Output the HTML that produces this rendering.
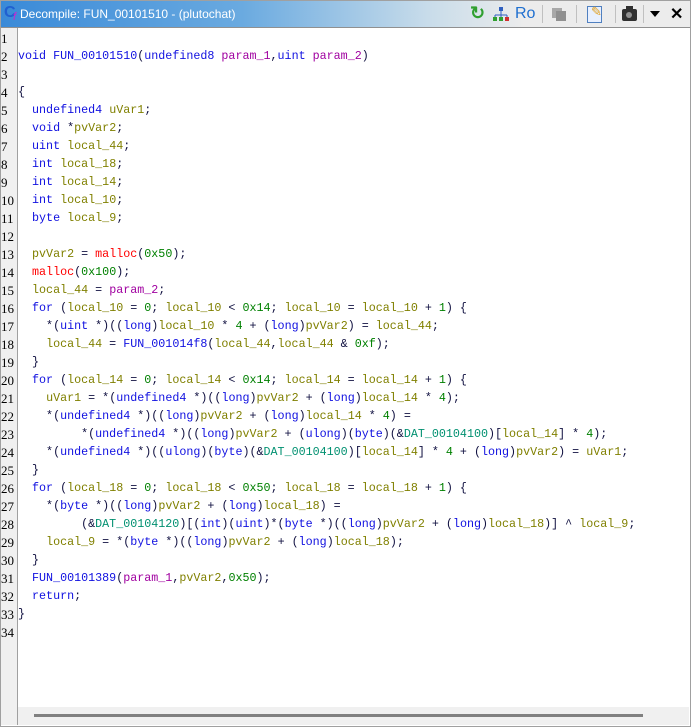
<!DOCTYPE html>
<html><head><style>
body{margin:0;width:691px;height:727px;background:#fff;overflow:hidden;position:relative;font-family:"Liberation Sans",sans-serif}
.frame{position:absolute;left:0;top:0;width:689px;height:725px;border:1px solid #a0a0a0}
.title{position:absolute;left:1px;top:1px;width:689px;height:26px;background:linear-gradient(90deg,#3a8ad8 0%,#6aaae0 35%,#c8dcea 62%,#ececec 76%,#ececec 100%);border-bottom:1px solid #909090}
.title .t{position:absolute;left:19px;top:6px;font-size:12px;color:#fff}
.gut{position:absolute;left:1px;top:28px;width:16px;height:697px;background:#f0f0f0;border-right:1px solid #a0a0a0}
.ln{position:absolute;left:1px;font-family:"Liberation Serif",serif;font-size:13px;color:#000;width:14px;text-align:left}
pre{position:absolute;left:18px;top:29px;margin:0;font-family:"Liberation Mono",monospace;font-size:11.7px;line-height:18px;color:#101040}
.k{color:#1010e0}.v{color:#808000}.p{color:#a000a0}.c{color:#008000}.r{color:#ff0000}.d{color:#009070}
.hs{position:absolute;left:18px;top:707px;width:671px;height:18px;background:#f0f0f0}
.hs div{position:absolute;left:16px;top:7px;width:609px;height:3px;background:#808080}
</style></head><body>
<div class="frame"></div>
<div class="title">
<span style="position:absolute;left:3px;top:3px;font-size:16px;font-weight:bold;color:#2060d0">C</span><span style="position:absolute;left:12px;top:10px;font-size:11px;color:#d020d0;font-style:italic">f</span>
<span class="t">Decompile: FUN_00101510 -  (plutochat)</span>
<span style="position:absolute;left:469px;top:2px;font-size:18px;color:#30a030;font-weight:bold">&#x21BB;</span>
<svg style="position:absolute;left:492px;top:6px" width="16" height="14"><rect x="6" y="0" width="4" height="4" fill="#3060c0"/><path d="M8 4v4M2 8h12M2 8v2M14 8v2M8 8v2" stroke="#3060c0" fill="none"/><rect x="0" y="10" width="4" height="4" fill="#30a030"/><rect x="6" y="10" width="4" height="4" fill="#30a030"/><rect x="12" y="10" width="4" height="4" fill="#d03030"/></svg>
<span style="position:absolute;left:514px;top:4px;font-size:16px;color:#2070d0">Ro</span>
<div style="position:absolute;left:541px;top:4px;width:1px;height:18px;background:#c0c0c0"></div>
<div style="position:absolute;left:551px;top:7px;width:10px;height:10px;background:#a8a8a8"></div><div style="position:absolute;left:555px;top:10px;width:10px;height:10px;background:#909090"></div>
<div style="position:absolute;left:575px;top:4px;width:1px;height:18px;background:#c0c0c0"></div>
<div style="position:absolute;left:586px;top:5px;width:13px;height:15px;border:1px solid #5080c0;background:#e8f0ff"></div><span style="position:absolute;left:590px;top:3px;font-size:13px;color:#e0a020">&#x270E;</span>
<div style="position:absolute;left:614px;top:4px;width:1px;height:18px;background:#c0c0c0"></div>
<div style="position:absolute;left:621px;top:8px;width:15px;height:12px;background:#303030;border-radius:2px"></div><div style="position:absolute;left:625px;top:5px;width:7px;height:4px;background:#303030"></div><div style="position:absolute;left:625px;top:11px;width:6px;height:6px;border-radius:50%;background:#909090"></div>
<div style="position:absolute;left:642px;top:4px;width:1px;height:18px;background:#c0c0c0"></div>
<div style="position:absolute;left:649px;top:10px;width:0;height:0;border-left:5px solid transparent;border-right:5px solid transparent;border-top:6px solid #000"></div>
<span style="position:absolute;left:669px;top:3px;font-size:16px;font-weight:bold;color:#000">&#x2715;</span>
</div>
<div class="gut"></div>
<pre>&#8203;
<span class="k">void</span> <span class="k">FUN_00101510</span>(<span class="k">undefined8</span> <span class="p">param_1</span>,<span class="k">uint</span> <span class="p">param_2</span>)

{
  <span class="k">undefined4</span> <span class="v">uVar1</span>;
  <span class="k">void</span> *<span class="v">pvVar2</span>;
  <span class="k">uint</span> <span class="v">local_44</span>;
  <span class="k">int</span> <span class="v">local_18</span>;
  <span class="k">int</span> <span class="v">local_14</span>;
  <span class="k">int</span> <span class="v">local_10</span>;
  <span class="k">byte</span> <span class="v">local_9</span>;

  <span class="v">pvVar2</span> = <span class="r">malloc</span>(<span class="c">0x50</span>);
  <span class="r">malloc</span>(<span class="c">0x100</span>);
  <span class="v">local_44</span> = <span class="p">param_2</span>;
  <span class="k">for</span> (<span class="v">local_10</span> = <span class="c">0</span>; <span class="v">local_10</span> &lt; <span class="c">0x14</span>; <span class="v">local_10</span> = <span class="v">local_10</span> + <span class="c">1</span>) {
    *(<span class="k">uint</span> *)((<span class="k">long</span>)<span class="v">local_10</span> * <span class="c">4</span> + (<span class="k">long</span>)<span class="v">pvVar2</span>) = <span class="v">local_44</span>;
    <span class="v">local_44</span> = <span class="k">FUN_001014f8</span>(<span class="v">local_44</span>,<span class="v">local_44</span> &amp; <span class="c">0xf</span>);
  }
  <span class="k">for</span> (<span class="v">local_14</span> = <span class="c">0</span>; <span class="v">local_14</span> &lt; <span class="c">0x14</span>; <span class="v">local_14</span> = <span class="v">local_14</span> + <span class="c">1</span>) {
    <span class="v">uVar1</span> = *(<span class="k">undefined4</span> *)((<span class="k">long</span>)<span class="v">pvVar2</span> + (<span class="k">long</span>)<span class="v">local_14</span> * <span class="c">4</span>);
    *(<span class="k">undefined4</span> *)((<span class="k">long</span>)<span class="v">pvVar2</span> + (<span class="k">long</span>)<span class="v">local_14</span> * <span class="c">4</span>) =
         *(<span class="k">undefined4</span> *)((<span class="k">long</span>)<span class="v">pvVar2</span> + (<span class="k">ulong</span>)(<span class="k">byte</span>)(&amp;<span class="d">DAT_00104100</span>)[<span class="v">local_14</span>] * <span class="c">4</span>);
    *(<span class="k">undefined4</span> *)((<span class="k">ulong</span>)(<span class="k">byte</span>)(&amp;<span class="d">DAT_00104100</span>)[<span class="v">local_14</span>] * <span class="c">4</span> + (<span class="k">long</span>)<span class="v">pvVar2</span>) = <span class="v">uVar1</span>;
  }
  <span class="k">for</span> (<span class="v">local_18</span> = <span class="c">0</span>; <span class="v">local_18</span> &lt; <span class="c">0x50</span>; <span class="v">local_18</span> = <span class="v">local_18</span> + <span class="c">1</span>) {
    *(<span class="k">byte</span> *)((<span class="k">long</span>)<span class="v">pvVar2</span> + (<span class="k">long</span>)<span class="v">local_18</span>) =
         (&amp;<span class="d">DAT_00104120</span>)[(<span class="k">int</span>)(<span class="k">uint</span>)*(<span class="k">byte</span> *)((<span class="k">long</span>)<span class="v">pvVar2</span> + (<span class="k">long</span>)<span class="v">local_18</span>)] ^ <span class="v">local_9</span>;
    <span class="v">local_9</span> = *(<span class="k">byte</span> *)((<span class="k">long</span>)<span class="v">pvVar2</span> + (<span class="k">long</span>)<span class="v">local_18</span>);
  }
  <span class="k">FUN_00101389</span>(<span class="p">param_1</span>,<span class="v">pvVar2</span>,<span class="c">0x50</span>);
  <span class="k">return</span>;
}
</pre>
<div style="position:absolute;left:0;top:2px">
<div class="ln" style="top:29px">1</div><div class="ln" style="top:47px">2</div><div class="ln" style="top:65px">3</div><div class="ln" style="top:83px">4</div><div class="ln" style="top:101px">5</div><div class="ln" style="top:119px">6</div><div class="ln" style="top:137px">7</div><div class="ln" style="top:155px">8</div><div class="ln" style="top:173px">9</div><div class="ln" style="top:191px">10</div><div class="ln" style="top:209px">11</div><div class="ln" style="top:227px">12</div><div class="ln" style="top:245px">13</div><div class="ln" style="top:263px">14</div><div class="ln" style="top:281px">15</div><div class="ln" style="top:299px">16</div><div class="ln" style="top:317px">17</div><div class="ln" style="top:335px">18</div><div class="ln" style="top:353px">19</div><div class="ln" style="top:371px">20</div><div class="ln" style="top:389px">21</div><div class="ln" style="top:407px">22</div><div class="ln" style="top:425px">23</div><div class="ln" style="top:443px">24</div><div class="ln" style="top:461px">25</div><div class="ln" style="top:479px">26</div><div class="ln" style="top:497px">27</div><div class="ln" style="top:515px">28</div><div class="ln" style="top:533px">29</div><div class="ln" style="top:551px">30</div><div class="ln" style="top:569px">31</div><div class="ln" style="top:587px">32</div><div class="ln" style="top:605px">33</div><div class="ln" style="top:623px">34</div>
</div>
<div class="hs"><div></div></div>
</body></html>
